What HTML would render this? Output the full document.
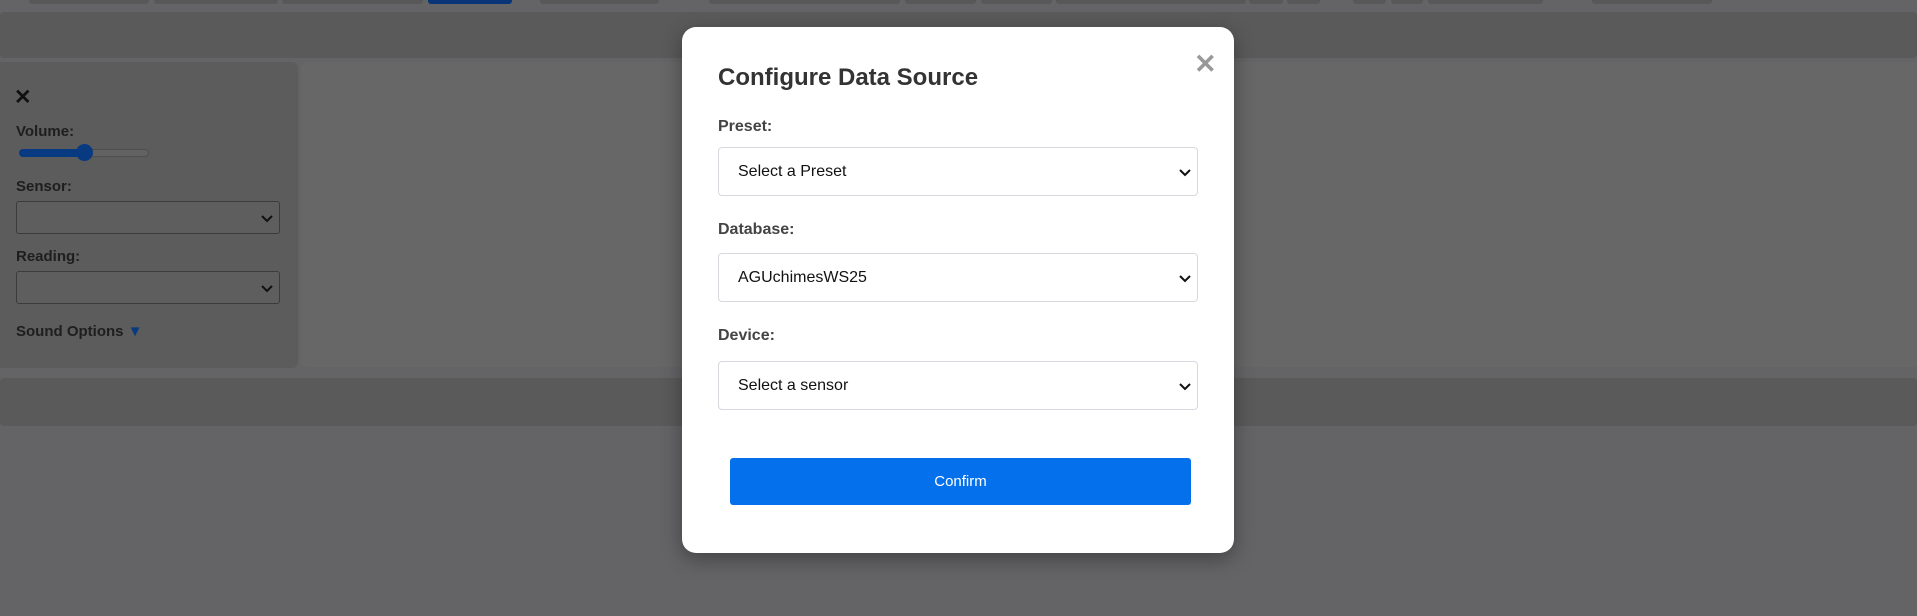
<!DOCTYPE html>
<html><head><style>
*{box-sizing:border-box;margin:0;padding:0}
body{width:1917px;height:616px;background:#646466;position:relative;overflow:hidden;font-family:"Liberation Sans",Arial,sans-serif}
.a{position:absolute}
.tab{position:absolute;top:0;height:4px;background:#585858;border-radius:0 0 3px 3px}
.lbl{position:absolute;font-weight:bold;color:#1e1e1e;font-size:15px}
.sel{position:absolute;border:1px solid #3c3c3c;background:#5e5e5e;border-radius:3px}
.msel{position:absolute;left:718px;width:480px;height:49px;border:1px solid #d6d9de;border-radius:4px;background:#fff;font-size:16px;color:#111;padding-left:19px;line-height:47px}
.ml{position:absolute;left:718px;font-weight:bold;font-size:16px;color:#444}
.chev{position:absolute;right:6px;top:50%;margin-top:-5px}
</style></head><body>
<div class="tab" style="left:29px;width:120px"></div>
<div class="tab" style="left:154px;width:124px"></div>
<div class="tab" style="left:282px;width:141px"></div>
<div class="tab" style="left:428px;width:84px;background:#0a3478"></div>
<div class="tab" style="left:540px;width:119px"></div>
<div class="tab" style="left:709px;width:191px"></div>
<div class="tab" style="left:905px;width:71px"></div>
<div class="tab" style="left:981px;width:71px"></div>
<div class="tab" style="left:1056px;width:190px"></div>
<div class="tab" style="left:1249px;width:34px"></div>
<div class="tab" style="left:1287px;width:33px"></div>
<div class="tab" style="left:1353px;width:33px"></div>
<div class="tab" style="left:1391px;width:32px"></div>
<div class="tab" style="left:1428px;width:115px"></div>
<div class="tab" style="left:1592px;width:120px"></div>

<div class="a" style="left:0;top:12px;width:1917px;height:46px;background:#5a5a5a;border-radius:4px"></div>
<div class="a" style="left:0;top:62px;width:298px;height:306px;background:#5c5c5c;border-radius:0 6px 6px 0"></div>
<div class="a" style="left:301px;top:62px;width:1616px;height:305px;background:#676767;border-radius:6px 0 0 6px"></div>
<div class="a" style="left:0;top:378px;width:1917px;height:48px;background:#5a5a5a;border-radius:4px"></div>

<div class="a" style="left:14px;top:85px;font-size:21px;font-weight:bold;color:#111">✕</div>
<div class="lbl" style="left:16px;top:123px">Volume:</div>
<div class="a" style="left:19px;top:149px;width:130px;height:8px;border-radius:4px;background:#626262;border:1px solid #4e4e4e"></div>
<div class="a" style="left:19px;top:149px;width:66px;height:8px;border-radius:4px;background:#083a82"></div>
<div class="a" style="left:76px;top:144px;width:17px;height:17px;border-radius:50%;background:#083a82"></div>
<div class="lbl" style="left:16px;top:178px">Sensor:</div>
<div class="sel" style="left:16px;top:201px;width:264px;height:33px"><svg class="chev" width="12" height="10" viewBox="0 0 12 10"><path d="M1 3l5 5 5-5" stroke="#111" stroke-width="2" fill="none"/></svg></div>
<div class="lbl" style="left:16px;top:248px">Reading:</div>
<div class="sel" style="left:16px;top:271px;width:264px;height:33px"><svg class="chev" width="12" height="10" viewBox="0 0 12 10"><path d="M1 3l5 5 5-5" stroke="#111" stroke-width="2" fill="none"/></svg></div>
<div class="lbl" style="left:16px;top:323px">Sound Options <span style="color:#083a82">▼</span></div>

<div class="a" style="left:682px;top:27px;width:552px;height:526px;background:#fff;border-radius:14px;box-shadow:0 6px 20px rgba(0,0,0,0.35)"></div>
<div class="a" style="left:1194px;top:49px;font-size:27px;font-weight:bold;color:#999;line-height:30px">✕</div>
<div class="a" style="left:718px;top:64px;font-size:24px;font-weight:bold;color:#333">Configure Data Source</div>
<div class="ml" style="left:718px;top:118px">Preset:</div>
<div class="msel" style="top:147px">Select a Preset<svg class="chev" width="12" height="10" viewBox="0 0 12 10"><path d="M1 3l5 5 5-5" stroke="#111" stroke-width="2" fill="none"/></svg></div>
<div class="ml" style="top:221px">Database:</div>
<div class="msel" style="top:253px">AGUchimesWS25<svg class="chev" width="12" height="10" viewBox="0 0 12 10"><path d="M1 3l5 5 5-5" stroke="#111" stroke-width="2" fill="none"/></svg></div>
<div class="ml" style="top:327px">Device:</div>
<div class="msel" style="top:361px">Select a sensor<svg class="chev" width="12" height="10" viewBox="0 0 12 10"><path d="M1 3l5 5 5-5" stroke="#111" stroke-width="2" fill="none"/></svg></div>
<div class="a" style="left:730px;top:458px;width:461px;height:47px;background:#0570eb;border-radius:3px;color:#fff;font-size:15px;text-align:center;line-height:47px">Confirm</div>
</body></html>
